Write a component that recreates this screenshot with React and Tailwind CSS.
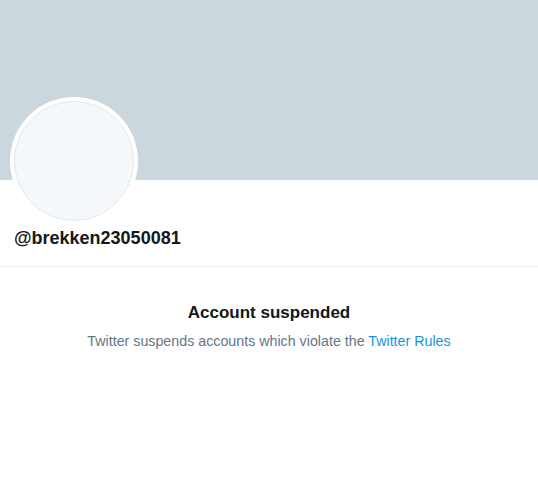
export default function App() {
  return (
    <div className="w-[538px] h-[500px] bg-white" style={{ fontFamily: '"Liberation Sans", Arial, sans-serif' }}>
      <div className="h-[180px] bg-[#ccd6dd]" />
      <div className="px-[10px] -mt-[83px]">
        <div className="w-[128px] h-[128px] rounded-full bg-white p-[4px] relative">
          <div className="w-full h-full rounded-full bg-[#f5f8fa] border border-[#e1e8ed]" />
        </div>
      </div>
      <div className="px-[14px] pt-[2px] pb-[17px] border-b border-[#e6ecf0]">
        <div className="text-[18px] leading-[22px] font-bold text-[#14171a]">@brekken23050081</div>
      </div>
      <div className="pt-[35px] flex flex-col items-center">
        <div className="text-[17px] leading-[22px] font-bold text-[#14171a]">Account suspended</div>
        <div className="mt-[7px] text-[14.25px] leading-[20px] text-[#657786]">
          Twitter suspends accounts which violate the <span className="text-[#1b95e0]">Twitter Rules</span>
        </div>
      </div>
    </div>
  );
}
